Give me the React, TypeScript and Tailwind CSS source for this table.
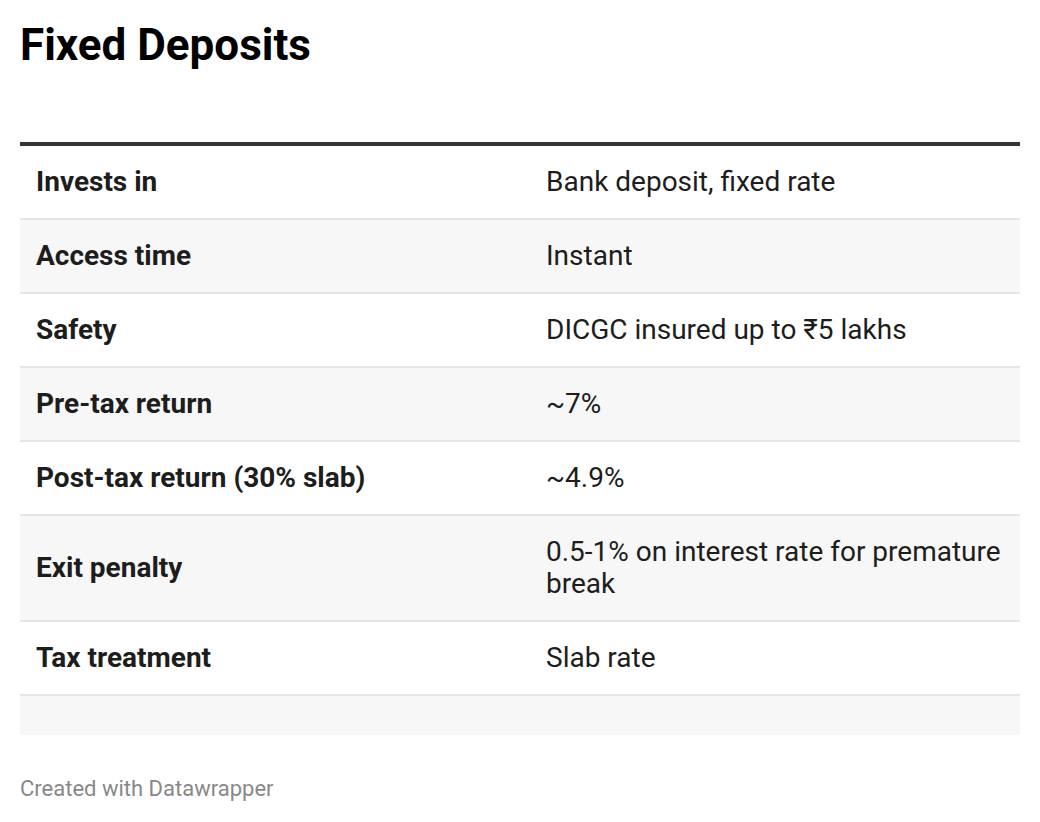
import React from 'react';

const ROWS: { label: string; value: string }[] = [
  { label: 'Invests in', value: 'Bank deposit, fixed rate' },
  { label: 'Access time', value: 'Instant' },
  { label: 'Safety', value: 'DICGC insured up to ₹5 lakhs' },
  { label: 'Pre-tax return', value: '~7%' },
  { label: 'Post-tax return (30% slab)', value: '~4.9%' },
  { label: 'Exit penalty', value: '0.5-1% on interest rate for premature break' },
  { label: 'Tax treatment', value: 'Slab rate' },
];

export default function App() {
  return (
    <div className="min-h-[822px] bg-white px-[20px] font-['Roboto','Liberation_Sans',sans-serif]">
      <h1 className="pt-[19px] text-[44px] font-bold leading-[1.2] text-black">Fixed Deposits</h1>

      <div className="mt-[70px] border-t-[4px] border-[#333333]">
        {ROWS.map((row, i) => (
          <div
            key={row.label}
            className={
              'grid grid-cols-[509px_1fr] items-center border-b-2 border-[#e6e6e6] py-[20px] text-[28px] leading-[32px] text-[#1d1d1d] ' +
              (i % 2 === 1 ? 'bg-[#f7f7f7]' : 'bg-white')
            }
          >
            <div className="pl-[16px] pr-[12px] font-bold">{row.label}</div>
            <div className="pl-[17px] pr-[17px]">{row.value}</div>
          </div>
        ))}
        <div className="h-[39px] bg-[#f7f7f7]" />
      </div>

      <p className="mt-[41px] text-[22px] leading-[26px] text-[#888888]">Created with Datawrapper</p>
    </div>
  );
}
